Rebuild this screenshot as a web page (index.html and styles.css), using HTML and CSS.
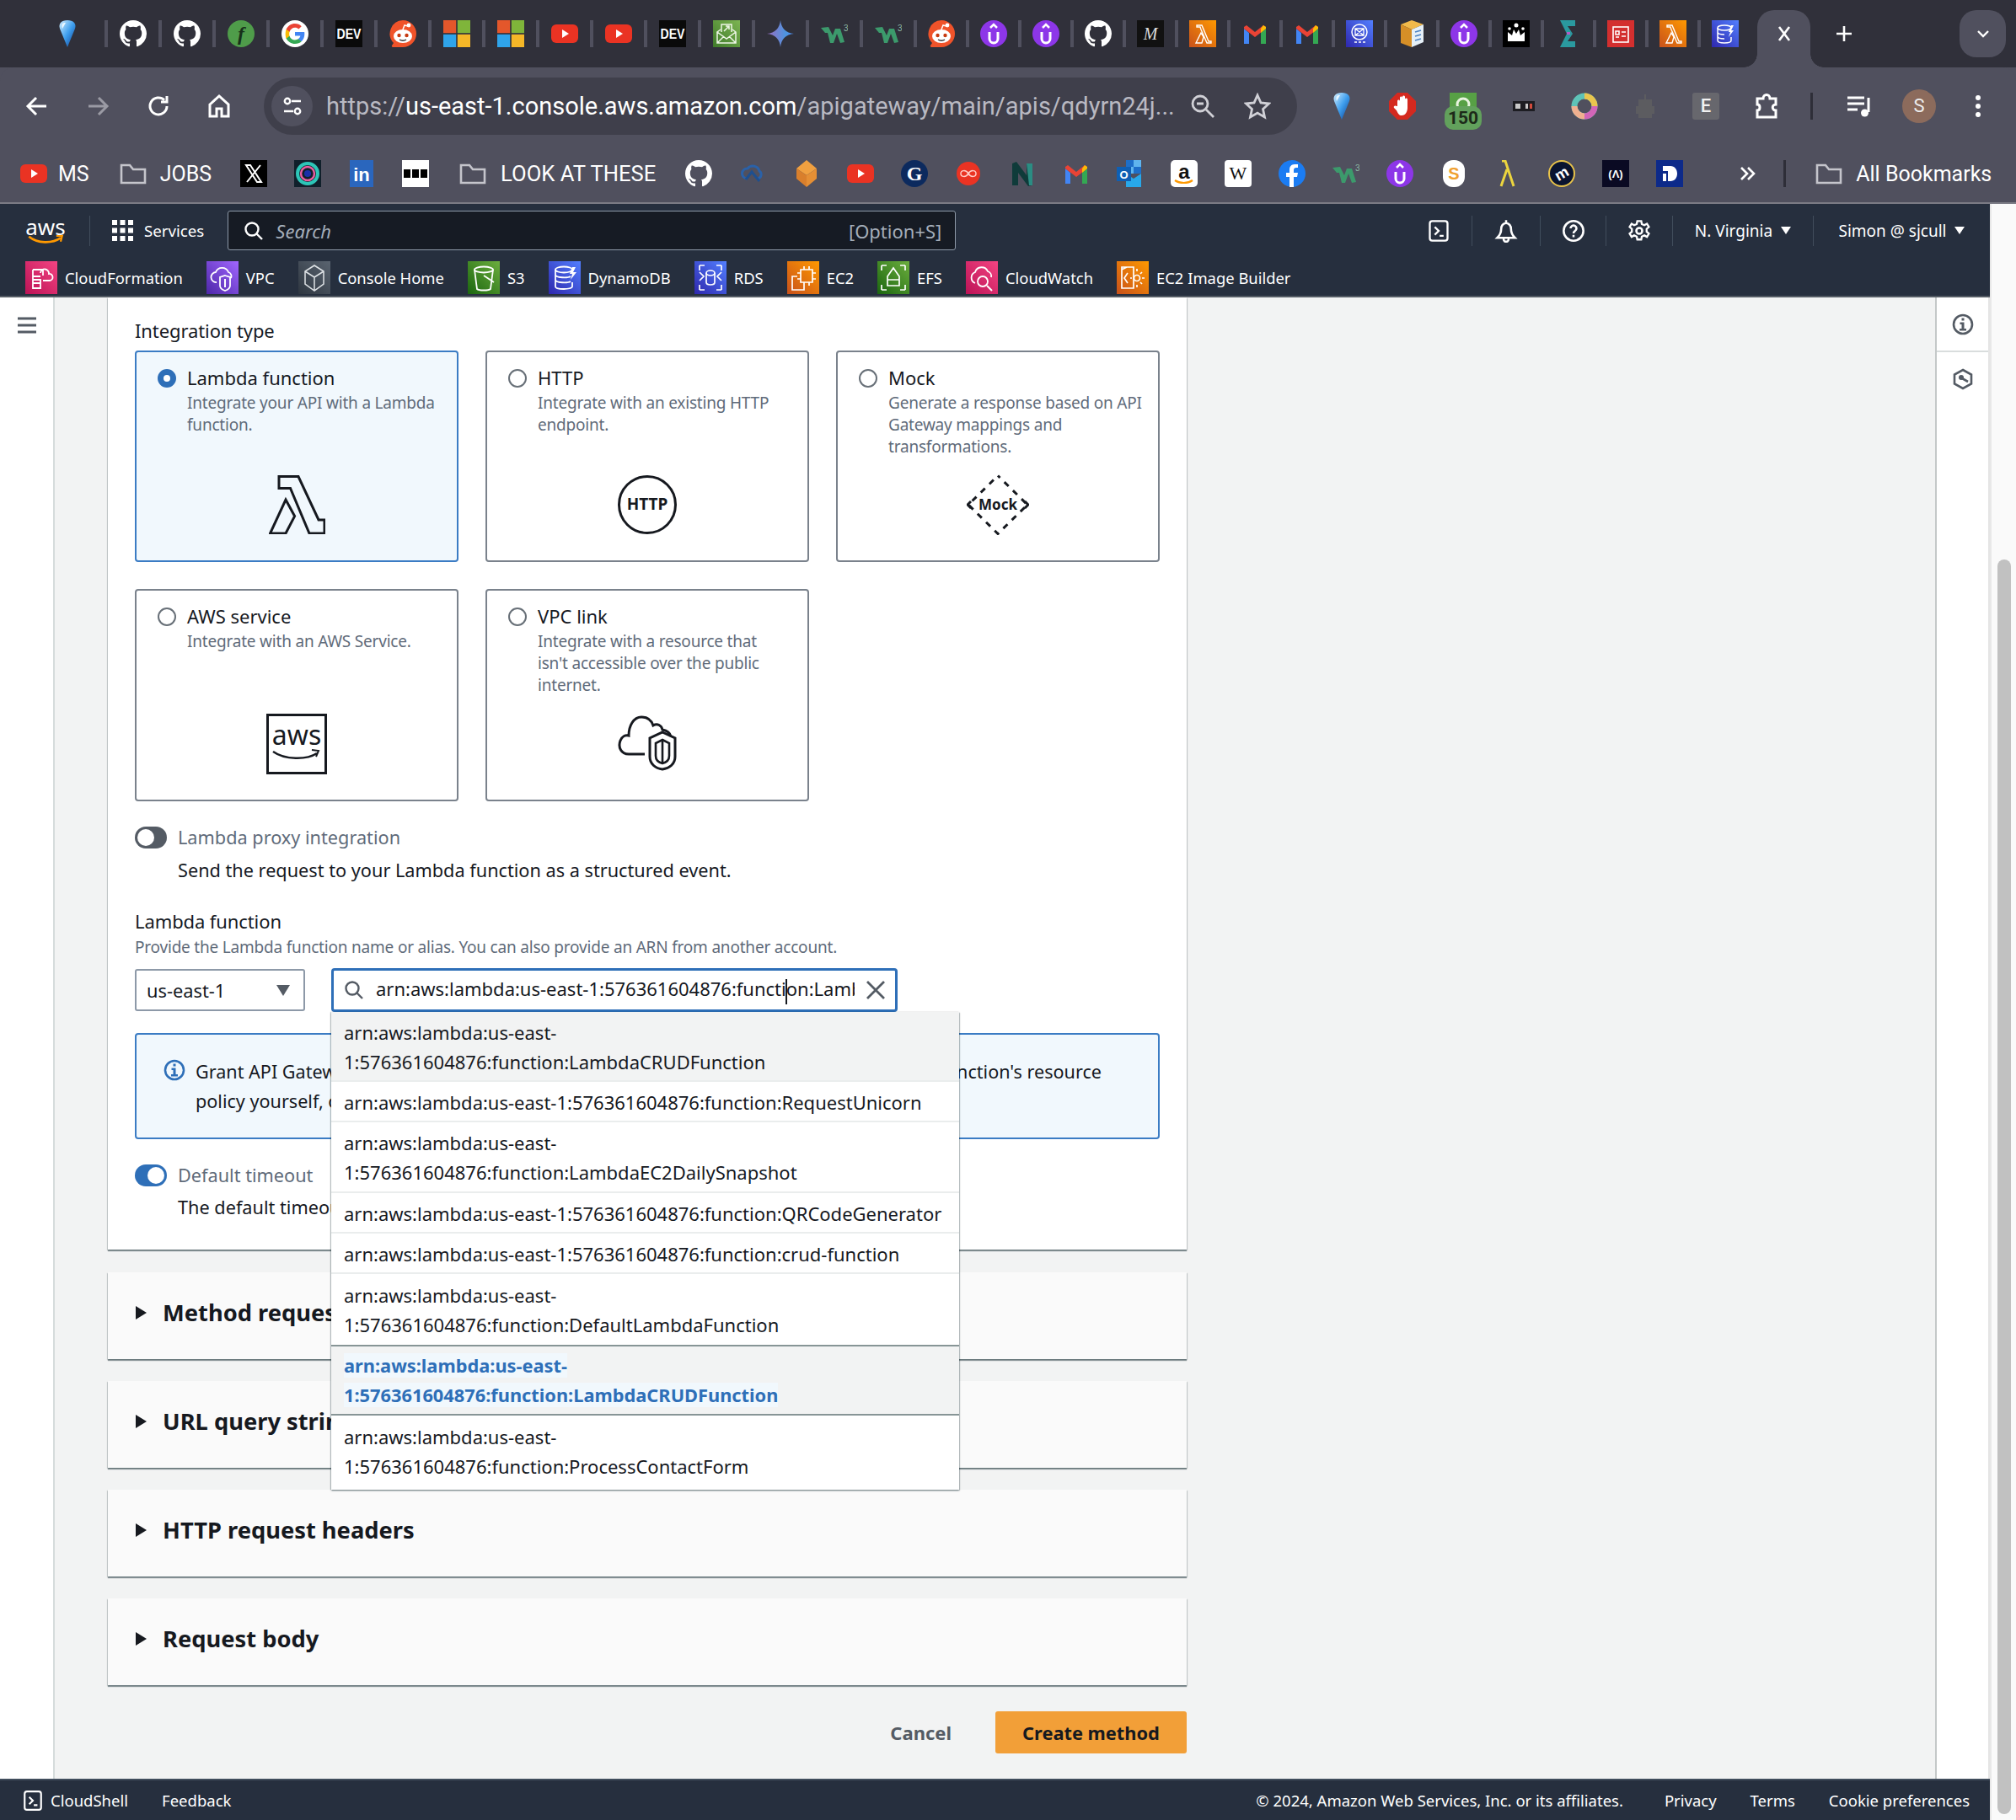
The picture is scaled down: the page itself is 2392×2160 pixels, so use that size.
FILE: index.html
```html
<!DOCTYPE html>
<html lang="en">
<head>
<meta charset="utf-8">
<title>Create method - API Gateway</title>
<link rel="stylesheet" href="styles.css">
</head>
<body>
<svg class="defs" xmlns="http://www.w3.org/2000/svg">
  <defs>
    <linearGradient id="gGem" x1="0" y1="0" x2="1" y2="1"><stop offset="0" stop-color="#d4efff"/><stop offset=".5" stop-color="#3f9fee"/><stop offset="1" stop-color="#0a3c8f"/></linearGradient>
    <linearGradient id="gStar" x1="0" y1="0" x2="1" y2="0"><stop offset="0" stop-color="#9a6cc0"/><stop offset=".7" stop-color="#4d95e0"/><stop offset="1" stop-color="#4d8df5"/></linearGradient>
    <linearGradient id="gOrange" x1="0" y1="1" x2="1" y2="0"><stop offset="0" stop-color="#c8511b"/><stop offset="1" stop-color="#ff9900"/></linearGradient>
    <linearGradient id="gBlue" x1="0" y1="1" x2="1" y2="0"><stop offset="0" stop-color="#2e27ad"/><stop offset="1" stop-color="#527fff"/></linearGradient>
    <linearGradient id="gMail" x1="0" y1="1" x2="1" y2="0"><stop offset="0" stop-color="#3f7a2a"/><stop offset="1" stop-color="#7db552"/></linearGradient>
    <symbol id="gem" viewBox="0 0 32 32"><path fill="url(#gGem)" d="M16 0C9 0 5 4 7 10l9 22 9-22c2-6-2-10-9-10z"/><path fill="#e9f7ff" d="M12 3c-3 1-3 4-2 7l4-7z"/></symbol>
    <symbol id="gh" viewBox="0 0 16 16"><path fill="#fff" d="M8 0C3.58 0 0 3.58 0 8c0 3.54 2.29 6.53 5.47 7.59.4.07.55-.17.55-.38 0-.19-.01-.82-.01-1.49-2.01.37-2.53-.49-2.69-.94-.09-.23-.48-.94-.82-1.13-.28-.15-.68-.52-.01-.53.63-.01 1.08.58 1.23.82.72 1.21 1.87.87 2.33.66.07-.52.28-.87.51-1.07-1.78-.2-3.64-.89-3.64-3.95 0-.87.31-1.59.82-2.15-.08-.2-.36-1.02.08-2.12 0 0 .67-.21 2.2.82.64-.18 1.32-.27 2-.27s1.36.09 2 .27c1.53-1.04 2.2-.82 2.2-.82.44 1.1.16 1.92.08 2.12.51.56.82 1.27.82 2.15 0 3.07-1.87 3.75-3.65 3.95.29.25.54.73.54 1.48 0 1.07-.01 1.93-.01 2.2 0 .21.15.46.55.38A8.013 8.013 0 0 0 16 8c0-4.42-3.58-8-8-8z"/></symbol>
    <symbol id="feedly" viewBox="0 0 32 32"><circle cx="16" cy="16" r="16" fill="#4f9c4a"/><text x="16" y="24" font-family="Liberation Serif" font-style="italic" font-weight="700" font-size="24" fill="#17301a" text-anchor="middle">f</text></symbol>
    <symbol id="google" viewBox="0 0 48 48"><circle cx="24" cy="24" r="24" fill="#fff"/><path fill="#4285f4" d="M41 24.5c0-1.3-.1-2.500-.3-3.500H24v6.800h9.600c-.4 2.200-1.700 4-3.500 5.300v4.400h5.700C39.100 34.400 41 29.900 41 24.500z"/><path fill="#34a853" d="M24 42c4.700 0 8.600-1.600 11.500-4.200l-5.700-4.400c-1.600 1.100-3.600 1.700-5.800 1.700-4.500 0-8.300-3-9.700-7.100H8.500v4.500C11.400 38 17.300 42 24 42z"/><path fill="#fbbc05" d="M14.300 28c-.7-2.500-.7-5.200 0-7.500V16H8.500c-2 3.900-2 12.600 0 16.500z"/><path fill="#ea4335" d="M24 13.200c2.600 0 4.800.9 6.600 2.600l5-5C32.600 7.800 28.700 6 24 6 17.300 6 11.400 10 8.500 16l5.800 4.500c1.400-4.200 5.200-7.300 9.700-7.300z"/></symbol>
    <symbol id="dev" viewBox="0 0 32 32"><rect width="32" height="32" fill="#0a0a0a"/><text x="1.500" y="22" font-family="Liberation Sans" font-weight="700" font-size="17" fill="#fff" textLength="29" lengthAdjust="spacingAndGlyphs">DEV</text></symbol>
    <symbol id="reddit" viewBox="0 0 32 32"><path fill="#f0532a" d="M16 0a16 16 0 1 1 0 32H4c-1 0-1.500-1-1-2l2-3A16 16 0 0 1 16 0z"/><ellipse cx="16" cy="19" rx="11" ry="8" fill="#fff"/><circle cx="11.500" cy="18" r="2.200" fill="#c73a12"/><circle cx="20.500" cy="18" r="2.200" fill="#c73a12"/><path d="M12 23c2.500 1.600 5.500 1.600 8 0" stroke="#333" stroke-width="1.400" fill="none"/><path d="M16 11l2-5 4 1" stroke="#fff" stroke-width="1.500" fill="none"/><circle cx="23" cy="6" r="2.400" fill="#fff"/></symbol>
    <symbol id="ms" viewBox="0 0 32 32"><rect width="15.200" height="15.200" fill="#e4572b"/><rect x="16.800" width="15.200" height="15.200" fill="#7fb53a"/><rect y="16.800" width="15.200" height="15.200" fill="#2fa4ea"/><rect x="16.800" y="16.800" width="15.200" height="15.200" fill="#f5b728"/></symbol>
    <symbol id="yt" viewBox="0 0 32 32"><rect x="0" y="5" width="32" height="22" rx="6" fill="#ea3323"/><path d="M13 11l8 5-8 5z" fill="#fff"/></symbol>
    <symbol id="mailg" viewBox="0 0 32 32"><rect width="32" height="32" fill="url(#gMail)"/><path d="M5 14v13h22V14l-4-3M9 11l-4 3 11 8 11-8M5 27l8-8M27 27l-8-8" fill="none" stroke="#eef6e6" stroke-width="1.500"/><path d="M10 14V5h12v9M13 13l6-6m-4 0h4v4" fill="none" stroke="#eef6e6" stroke-width="1.500"/></symbol>
    <symbol id="gemini" viewBox="0 0 32 32"><path fill="url(#gStar)" d="M16 0Q17.500 14.500 32 16 17.500 17.500 16 32 14.500 17.500 0 16 14.500 14.500 16 0z"/></symbol>
    <symbol id="w3" viewBox="0 0 32 32"><path fill="#3c9a6c" d="M0 9l9-1 5 10 3-8h6l5 16-5 1-4-11-4 11h-4L8 15l-3 0z"/><text x="27" y="13" font-family="Liberation Sans" font-size="10" fill="#8fb8a4">3</text></symbol>
    <symbol id="uni" viewBox="0 0 32 32"><circle cx="16" cy="16" r="16" fill="#8d36e8"/><path d="M11 14v8a5 5 0 0 0 10 0v-8" fill="none" stroke="#fff" stroke-width="3"/><path d="M12 9l4-4 4 4" fill="none" stroke="#fff" stroke-width="2.500"/></symbol>
    <symbol id="mdark" viewBox="0 0 32 32"><rect width="32" height="32" fill="#111"/><text x="16" y="23" font-family="Liberation Serif" font-style="italic" font-size="20" fill="#ddd" text-anchor="middle">M</text></symbol>
    <symbol id="lam" viewBox="0 0 32 32"><rect width="32" height="32" fill="url(#gOrange)"/><path d="M9 6h6l8 19h3v2h-5l-7-16-1-3H9zM14 15l3 5-2 7H8z" fill="none" stroke="#fff" stroke-width="1.400"/></symbol>
    <symbol id="gmail" viewBox="0 0 32 32"><path fill="#4285f4" d="M3 28V10l6 5v13z"/><path fill="#34a853" d="M23 28V15l6-5v18z"/><path fill="#ea4335" d="M3 10l13 10 13-10v-2l-3-2-10 8L6 6 3 8z"/><path fill="#fbbc05" d="M23 10v5l6-5V8l-3-2z"/></symbol>
    <symbol id="svcmail" viewBox="0 0 32 32"><rect width="32" height="32" fill="url(#gBlue)"/><circle cx="16" cy="14" r="9" fill="none" stroke="#fff" stroke-width="1.500"/><path d="M11 10h10v8H11zM11 10l10 8M21 10l-10 8M10 26h3M15 26h3M20 26h3" fill="none" stroke="#fff" stroke-width="1.300"/></symbol>
    <symbol id="box" viewBox="0 0 32 32"><path fill="#f1b94a" d="M16 0l14 5-14 6L3 5z"/><path fill="#d68f27" d="M3 5l13 6v21L3 27z"/><path fill="#e6f0f8" d="M16 11l14-6v21l-14 6z"/><path stroke="#4c82c4" stroke-width="1.800" d="M20 14l7-2M20 19l7-2M20 24l7-2"/></symbol>
    <symbol id="crown" viewBox="0 0 32 32"><rect width="32" height="32" fill="#000"/><path fill="#fff" d="M6 25V14l5 4 2-7 3 5 3-5 2 7 5-4v11z"/><circle cx="16" cy="6" r="2.500" fill="#fff"/><circle cx="8" cy="10" r="1.800" fill="#fff"/><circle cx="24" cy="10" r="1.800" fill="#fff"/></symbol>
    <symbol id="sigma" viewBox="0 0 32 32"><path fill="#2a9a9f" d="M6 0h18v7H15l6 9-6 9h9v7H6l8-16z"/><path fill="#b45cc7" d="M14 14h4v3h-4z"/></symbol>
    <symbol id="redbox" viewBox="0 0 32 32"><rect width="32" height="32" fill="#d32f2f"/><rect x="7" y="8" width="18" height="18" fill="none" stroke="#fff" stroke-width="1.600"/><path d="M10 13h4v4h-4zM10 20h4M17 14h5M17 19h5" fill="none" stroke="#fff" stroke-width="1.600"/></symbol>
    <symbol id="dyn" viewBox="0 0 32 32"><rect width="32" height="32" fill="url(#gBlue)"/><ellipse cx="15" cy="9" rx="8" ry="3" fill="none" stroke="#fff" stroke-width="1.500"/><path d="M7 9v15c0 2 4 3 8 3s8-1 8-3v-4M7 14c0 2 4 3 8 3M7 19c0 2 4 3 8 3" fill="none" stroke="#fff" stroke-width="1.500"/><path d="M23 6l3 0-3 6h3l-6 8 2-6h-2z" fill="#fff"/></symbol>
    <symbol id="cloudb" viewBox="0 0 32 32"><path d="M9 22a6 6 0 0 1 1-12 8 8 0 0 1 14 3 5 5 0 0 1-2 9" fill="none" stroke="#2a61a8" stroke-width="3"/><path d="M8 23l7-9 9 11" fill="none" stroke="#1e4f8f" stroke-width="3"/></symbol>
    <symbol id="cube" viewBox="0 0 32 32"><path fill="#f0a040" d="M16 0l12 10-12 8-12-8z"/><path fill="#d97f2c" d="M4 10l12 8v14L4 22z"/><path fill="#e58f35" d="M28 10L16 18v14l12-10z"/></symbol>
    <symbol id="guard" viewBox="0 0 32 32"><circle cx="16" cy="16" r="16" fill="#0c2a5e"/><text x="16" y="24" font-family="Liberation Serif" font-weight="700" font-size="24" fill="#fff" text-anchor="middle">G</text></symbol>
    <symbol id="inf" viewBox="0 0 32 32"><circle cx="16" cy="16" r="14" fill="#ea3323"/><path d="M16 16c-3-5-9-4-9 0s6 5 9 0 9-4 9 0-6 5-9 0z" fill="none" stroke="#ffcdc7" stroke-width="1.500"/></symbol>
    <symbol id="nn" viewBox="0 0 32 32"><path fill="#0f3b3a" d="M4 30V4l5-2 12 16V4h7v26l-5 1L11 15v15z"/><path fill="#2b8d83" d="M21 4h7v26h-4z"/></symbol>
    <symbol id="outlook" viewBox="0 0 32 32"><path fill="#1d6fc9" d="M11 0h18v16H11z"/><path fill="#5fb5ee" d="M20 0h9v8h-9zM11 8h9v8h-9z"/><path fill="#28a8ea" d="M11 16l9 6 9-6v16H11z"/><rect y="8" width="17" height="17" fill="#0f5fb3"/><text x="8.500" y="22" font-family="Liberation Sans" font-weight="700" font-size="13" fill="#fff" text-anchor="middle">O</text></symbol>
    <symbol id="amazon" viewBox="0 0 32 32"><rect width="32" height="32" rx="5" fill="#fff"/><text x="16" y="22" font-family="Liberation Sans" font-weight="700" font-size="24" fill="#111" text-anchor="middle">a</text><path d="M5 24c6 4 15 4 21 0" stroke="#f90" stroke-width="2.200" fill="none"/></symbol>
    <symbol id="wiki" viewBox="0 0 32 32"><rect width="32" height="32" rx="4" fill="#fff"/><text x="16" y="23" font-family="Liberation Serif" font-size="22" fill="#111" text-anchor="middle">W</text></symbol>
    <symbol id="fb" viewBox="0 0 32 32"><circle cx="16" cy="16" r="16" fill="#1b7cf2"/><path fill="#fff" d="M18 32V20h4l1-5h-5v-3c0-2 1-3 3-3h2V5h-4c-4 0-6 3-6 6v4h-4v5h4v12z"/></symbol>
    <symbol id="sman" viewBox="0 0 32 32"><rect x="3" y="0" width="26" height="32" rx="12" fill="#fff"/><text x="16" y="23" font-family="Liberation Sans" font-weight="700" font-size="20" fill="#f0a030" text-anchor="middle">S</text></symbol>
    <symbol id="lamy" viewBox="0 0 32 32"><path d="M9 1h4l10 30M15 11L8 31" fill="none" stroke="#ecd53f" stroke-width="3"/></symbol>
    <symbol id="mround" viewBox="0 0 32 32"><circle cx="16" cy="16" r="15" fill="#0a1430" stroke="#e8c34a" stroke-width="2"/><text x="16" y="22" font-family="Liberation Sans" font-weight="700" font-size="18" fill="#fff" text-anchor="middle" transform="rotate(-30 16 16)">m</text></symbol>
    <symbol id="fcc" viewBox="0 0 32 32"><rect width="32" height="32" fill="#0a0a23"/><text x="16" y="21" font-family="Liberation Sans" font-size="13" font-weight="700" fill="#fff" text-anchor="middle">(&#923;)</text></symbol>
    <symbol id="dash" viewBox="0 0 32 32"><rect width="32" height="32" fill="#0d2a8a"/><path fill="#fff" d="M8 7h9c5 0 8 4 8 9s-3 9-8 9h-3V13H8zM8 16h4v9H8z"/></symbol>
    <symbol id="xlogo" viewBox="0 0 32 32"><rect width="32" height="32" fill="#000"/><path fill="none" stroke="#fff" stroke-width="2" d="M7 6h5l13 20h-5zM24 6L8 26"/></symbol>
    <symbol id="ring" viewBox="0 0 32 32"><rect width="32" height="32" fill="#10202b"/><circle cx="16" cy="16" r="12" fill="none" stroke="#2dc6b8" stroke-width="4"/><circle cx="16" cy="16" r="8" fill="none" stroke="#ea5fa0" stroke-width="2.500"/><circle cx="16" cy="16" r="4" fill="#1b2fa8"/></symbol>
    <symbol id="lnk" viewBox="0 0 32 32"><rect x="2" width="28" height="32" fill="#2a66bd"/><text x="16" y="25" font-family="Liberation Sans" font-weight="700" font-size="22" fill="#fff" text-anchor="middle">in</text></symbol>
    <symbol id="blk" viewBox="0 0 32 32"><rect width="32" height="32" fill="#fff"/><path fill="#000" d="M2 11h8v10H2zM12 11h8v10h-8zM22 11h8v10h-8z"/></symbol>
    <symbol id="folder" viewBox="0 0 32 32"><path fill="none" stroke="#c5c5cc" stroke-width="2.600" d="M2 27V6h10l4 5h14v16z"/></symbol>
    <symbol id="trm" viewBox="0 0 24 24"><rect x="3" y="2" width="18" height="20" rx="2.500" fill="none" stroke="#fff" stroke-width="2"/><path d="M8 8l4 4-4 4M13 17h4" fill="none" stroke="#fff" stroke-width="2"/></symbol>
  </defs>
</svg>

<div class="chrome">
  <div class="tabstrip">
    <svg class="fav first"><use href="#gem"/></svg>
    <div class="tab"><svg class="fav"><use href="#gh"/></svg></div>
    <div class="tab"><svg class="fav"><use href="#gh"/></svg></div>
    <div class="tab"><svg class="fav"><use href="#feedly"/></svg></div>
    <div class="tab"><svg class="fav"><use href="#google"/></svg></div>
    <div class="tab"><svg class="fav"><use href="#dev"/></svg></div>
    <div class="tab"><svg class="fav"><use href="#reddit"/></svg></div>
    <div class="tab"><svg class="fav"><use href="#ms"/></svg></div>
    <div class="tab"><svg class="fav"><use href="#ms"/></svg></div>
    <div class="tab"><svg class="fav"><use href="#yt"/></svg></div>
    <div class="tab"><svg class="fav"><use href="#yt"/></svg></div>
    <div class="tab"><svg class="fav"><use href="#dev"/></svg></div>
    <div class="tab"><svg class="fav"><use href="#mailg"/></svg></div>
    <div class="tab"><svg class="fav"><use href="#gemini"/></svg></div>
    <div class="tab"><svg class="fav"><use href="#w3"/></svg></div>
    <div class="tab"><svg class="fav"><use href="#w3"/></svg></div>
    <div class="tab nr"><svg class="fav"><use href="#reddit"/></svg></div>
    <div class="tab nr"><svg class="fav"><use href="#uni"/></svg></div>
    <div class="tab nr"><svg class="fav"><use href="#uni"/></svg></div>
    <div class="tab nr"><svg class="fav"><use href="#gh"/></svg></div>
    <div class="tab nr"><svg class="fav"><use href="#mdark"/></svg></div>
    <div class="tab nr"><svg class="fav"><use href="#lam"/></svg></div>
    <div class="tab nr"><svg class="fav"><use href="#gmail"/></svg></div>
    <div class="tab nr"><svg class="fav"><use href="#gmail"/></svg></div>
    <div class="tab nr"><svg class="fav"><use href="#svcmail"/></svg></div>
    <div class="tab nr"><svg class="fav"><use href="#box"/></svg></div>
    <div class="tab nr"><svg class="fav"><use href="#uni"/></svg></div>
    <div class="tab nr"><svg class="fav"><use href="#crown"/></svg></div>
    <div class="tab nr"><svg class="fav"><use href="#sigma"/></svg></div>
    <div class="tab nr"><svg class="fav"><use href="#redbox"/></svg></div>
    <div class="tab nr"><svg class="fav"><use href="#lam"/></svg></div>
    <div class="tab nr"><svg class="fav"><use href="#dyn"/></svg></div>
    <div class="active-tab"><svg class="ic24" viewBox="0 0 24 24"><path d="M6 4l12 16M18 4L6 20" stroke="#fff" stroke-width="2.600" fill="none"/></svg></div>
    <svg class="newtab" viewBox="0 0 24 24"><path d="M12 3v18M3 12h18" stroke="#fff" stroke-width="2.600" fill="none"/></svg>
    <div class="tabchev"><svg class="ic20" viewBox="0 0 20 20"><path d="M4 7l6 6 6-6" stroke="#fff" stroke-width="2.400" fill="none"/></svg></div>
  </div>

  <div class="toolbar">
    <div class="nav first"><svg class="ic32" viewBox="0 0 32 32"><path d="M27 16H6M15 6L5 16l10 10" stroke="#fff" stroke-width="3" fill="none"/></svg></div>
    <div class="nav"><svg class="ic32" viewBox="0 0 32 32"><path d="M5 16h21M17 6l10 10-10 10" stroke="#9a9aa4" stroke-width="3" fill="none"/></svg></div>
    <div class="nav"><svg class="ic32" viewBox="0 0 32 32"><path d="M26 16a10 10 0 1 1-3-7.200M26 4v7h-7" stroke="#fff" stroke-width="3" fill="none"/></svg></div>
    <div class="nav"><svg class="ic32" viewBox="0 0 32 32"><path d="M5 14L16 4l11 10v14h-8v-9h-6v9H5z" stroke="#fff" stroke-width="3" fill="none"/></svg></div>
    <div class="omnibox">
      <div class="siteinfo"><svg class="ic28" viewBox="0 0 28 28"><circle cx="8" cy="8" r="3.200" fill="none" stroke="#fff" stroke-width="2.400"/><path d="M13 8h11M4 20h11" stroke="#fff" stroke-width="2.600"/><circle cx="20" cy="20" r="3.200" fill="none" stroke="#fff" stroke-width="2.400"/></svg></div>
      <div class="url"><span class="dim">https://</span>us-east-1.console.aws.amazon.com<span class="dim">/apigateway/main/apis/qdyrn24j...</span></div>
      <svg class="ic32 zoomic" viewBox="0 0 32 32"><circle cx="13" cy="13" r="9" fill="none" stroke="#d0d0d6" stroke-width="2.800"/><path d="M20 20l9 9M9 13h8" stroke="#d0d0d6" stroke-width="2.800"/></svg>
      <svg class="ic32 star" viewBox="0 0 32 32"><path d="M16 3l4 9 9.500 1-7 6.500 2 9.500-8.500-5-8.500 5 2-9.500-7-6.500L12 12z" fill="none" stroke="#d0d0d6" stroke-width="2.800"/></svg>
    </div>
    <div class="ext start"><svg class="fav"><use href="#gem"/></svg></div>
    <div class="ext"><svg class="fav" viewBox="0 0 32 32"><path fill="#d4291f" d="M10 0h12l10 10v12L22 32H10L0 22V10z"/><path fill="#fff" d="M10 16v-6c0-2 3-2 3 0V6c0-2 3-2 3 0V5c0-2 3-2 3 0v3c0-2 3-2 3 0v10c0 4-2 9-7 9-3 0-4-2-6-6l-3-3c-1-2 1-3 3-2z"/></svg></div>
    <div class="ext"><div class="badgewrap"><svg class="fav" viewBox="0 0 32 32"><rect width="32" height="18" fill="#57a045"/><circle cx="16" cy="14" r="7" fill="none" stroke="#e8f3df" stroke-width="3"/></svg><span class="badge">150</span></div></div>
    <div class="ext"><svg class="fav" viewBox="0 0 32 32"><rect x="3" y="10" width="26" height="12" fill="#1d1d22"/><rect x="6" y="13" width="6" height="6" fill="#c9c9c9"/><rect x="18" y="13" width="3" height="6" fill="#c9c9c9"/><rect x="23" y="13" width="3" height="6" fill="#d24a3c"/></svg></div>
    <div class="ext"><svg class="fav" viewBox="0 0 32 32"><circle cx="16" cy="16" r="12" fill="none" stroke="#5ec3b7" stroke-width="7"/><path d="M16 4a12 12 0 0 1 12 12" fill="none" stroke="#e9c64e" stroke-width="7"/><path d="M28 16a12 12 0 0 1-12 12" fill="none" stroke="#d265b8" stroke-width="7"/><path d="M16 28A12 12 0 0 1 4 16" fill="none" stroke="#f0b090" stroke-width="7"/></svg></div>
    <div class="ext"><svg class="fav" viewBox="0 0 32 32"><path fill="#5c5c60" d="M15 2h2v6h-2zM8 8h16v8h3v9h-3v5H8v-5H5v-9h3z"/></svg></div>
    <div class="ext"><div class="e-ext">E</div></div>
    <div class="ext"><svg class="fav" viewBox="0 0 32 32"><path d="M5 7h7c0-6 8-6 8 0h7v7c-5 0-5 7 0 7v8H5v-8c4 0 4-7 0-7z" fill="none" stroke="#fff" stroke-width="3"/></svg></div>
    <div class="tsep"></div>
    <div class="ext media"><svg class="fav" viewBox="0 0 32 32"><path d="M2 6h20M2 13h20M2 20h12" stroke="#fff" stroke-width="3"/><path d="M27 6v17" stroke="#fff" stroke-width="3"/><circle cx="22.500" cy="24" r="4.500" fill="#fff"/></svg></div>
    <div class="ext av"><div class="avatar">S</div></div>
    <div class="ext"><svg class="fav" viewBox="0 0 32 32"><circle cx="16" cy="6" r="3" fill="#fff"/><circle cx="16" cy="16" r="3" fill="#fff"/><circle cx="16" cy="26" r="3" fill="#fff"/></svg></div>
  </div>

  <div class="bookmarks">
    <div class="bm ms"><svg class="fav"><use href="#yt"/></svg><span>MS</span></div>
    <div class="bm jobs"><svg class="fav"><use href="#folder"/></svg><span>JOBS</span></div>
    <svg class="fav"><use href="#xlogo"/></svg>
    <svg class="fav"><use href="#ring"/></svg>
    <svg class="fav"><use href="#lnk"/></svg>
    <svg class="fav"><use href="#blk"/></svg>
    <div class="bm look"><svg class="fav"><use href="#folder"/></svg><span>LOOK AT THESE</span></div>
    <svg class="fav"><use href="#gh"/></svg>
    <svg class="fav"><use href="#cloudb"/></svg>
    <svg class="fav"><use href="#cube"/></svg>
    <svg class="fav"><use href="#yt"/></svg>
    <svg class="fav"><use href="#guard"/></svg>
    <svg class="fav"><use href="#inf"/></svg>
    <svg class="fav"><use href="#nn"/></svg>
    <svg class="fav"><use href="#gmail"/></svg>
    <svg class="fav"><use href="#outlook"/></svg>
    <svg class="fav"><use href="#amazon"/></svg>
    <svg class="fav"><use href="#wiki"/></svg>
    <svg class="fav"><use href="#fb"/></svg>
    <svg class="fav"><use href="#w3"/></svg>
    <svg class="fav"><use href="#uni"/></svg>
    <svg class="fav"><use href="#sman"/></svg>
    <svg class="fav"><use href="#lamy"/></svg>
    <svg class="fav"><use href="#mround"/></svg>
    <svg class="fav"><use href="#fcc"/></svg>
    <svg class="fav"><use href="#dash"/></svg>
    <svg class="more" viewBox="0 0 24 24"><path d="M5 5l7 7-7 7M13 5l7 7-7 7" stroke="#fff" stroke-width="2.600" fill="none"/></svg>
    <div class="bsep"></div>
    <div class="bm all"><svg class="fav"><use href="#folder"/></svg><span>All Bookmarks</span></div>
  </div>
</div>

<div class="app">
  <div class="console">
    <header class="awshead">
      <div class="hrow1">
        <div class="logo"><span class="logotext">aws</span><svg class="smile" viewBox="0 0 50 14"><path d="M2 2c12 10 32 10 44 2" stroke="#f90" stroke-width="3.200" fill="none"/><path d="M40 1l8 0-2 8" stroke="#f90" stroke-width="2.600" fill="none"/></svg></div>
        <div class="hdiv"></div>
        <svg class="grid" viewBox="0 0 25 25"><path fill="#fff" d="M0 0h6v6H0zM9.500 0h6v6h-6zM19 0h6v6h-6zM0 9.500h6v6H0zM9.500 9.500h6v6h-6zM19 9.500h6v6h-6zM0 19h6v6H0zM9.500 19h6v6h-6zM19 19h6v6h-6z"/></svg>
        <span class="services">Services</span>
        <div class="gsearch">
          <svg class="ic24" viewBox="0 0 24 24"><circle cx="10" cy="10" r="7.500" fill="none" stroke="#fff" stroke-width="2.400"/><path d="M15.500 15.500L22 22" stroke="#fff" stroke-width="2.400"/></svg>
          <span class="gs-text">Search</span>
          <span class="gs-key">[Option+S]</span>
        </div>
        <div class="hright">
          <div class="hcell first"><svg class="ic28" viewBox="0 0 24 24"><use href="#trm"/></svg></div>
          <div class="hcell bell"><svg class="ic28" viewBox="0 0 24 24"><path d="M12 1v3M12 4c3 0 5 3 5 6 0 4 1 6 4 9H3c3-3 4-5 4-9 0-3 2-6 5-6zM9.500 19v1.500a2.500 2.500 0 0 0 5 0V19" fill="none" stroke="#fff" stroke-width="2.200"/></svg></div>
          <div class="hcell help"><svg class="ic28" viewBox="0 0 24 24"><circle cx="12" cy="12" r="10" fill="none" stroke="#fff" stroke-width="2.200"/><path d="M9 9.500a3 3 0 1 1 4.500 2.600c-1 .6-1.500 1.200-1.500 2.400M12 16v2.500" fill="none" stroke="#fff" stroke-width="2.200"/></svg></div>
          <div class="hcell gear"><svg class="ic28" viewBox="0 0 24 24"><circle cx="12" cy="12" r="3" fill="none" stroke="#fff" stroke-width="2.200"/><path d="M10 2h4l.6 3 2.600 1.200 2.600-1.500 2 3.300-2.300 2 0 2.800 2.300 2-2 3.300-2.600-1.500-2.600 1.200-.6 3h-4l-.6-3-2.600-1.200-2.600 1.500-2-3.300 2.300-2 0-2.800-2.300-2 2-3.300 2.600 1.500L9.400 5z" fill="none" stroke="#fff" stroke-width="2"/></svg></div>
          <div class="hcell region"><span>N. Virginia</span><i class="caret-w"></i></div>
          <div class="hcell user"><span>Simon @ sjcull</span><i class="caret-w"></i></div>
        </div>
      </div>
      <div class="hrow2">
        <div class="fav-item"><span class="svc pink"><svg viewBox="0 0 38 39"><path d="M9 10h12v7M9 10v22h9V22H9M9 18h9M9 26h9M18 14a5 5 0 0 1 10 1 4 4 0 0 1 1 8h-8" fill="none" stroke="#fff" stroke-width="1.800"/></svg></span>CloudFormation</div>
        <div class="fav-item"><span class="svc purple"><svg viewBox="0 0 38 39"><path d="M12 25a6 6 0 0 1-1-12 8 8 0 0 1 15 0 5 5 0 0 1 3 7M22 17l6 2v10c0 3-3 5-6 6-3-1-6-3-6-6V19z" fill="none" stroke="#fff" stroke-width="1.800"/><path d="M22 21v10" stroke="#fff" stroke-width="2"/></svg></span>VPC</div>
        <div class="fav-item"><span class="svc grayc"><svg viewBox="0 0 38 39"><path d="M19 5l11 7v15l-11 8-11-8V12zM8 12l11 7 11-7M19 19v16" fill="none" stroke="#dfe3e6" stroke-width="1.500"/></svg></span>Console Home</div>
        <div class="fav-item"><span class="svc green"><svg viewBox="0 0 38 39"><ellipse cx="19" cy="10" rx="11" ry="3.500" fill="none" stroke="#fff" stroke-width="1.800"/><path d="M8 10l3 23c2 2 14 2 16 0l3-23M19 17l12 8" fill="none" stroke="#fff" stroke-width="1.800"/></svg></span>S3</div>
        <div class="fav-item"><span class="svc blue"><svg viewBox="0 0 38 39"><ellipse cx="18" cy="10" rx="10" ry="3.500" fill="none" stroke="#fff" stroke-width="1.800"/><path d="M8 10v20c0 4 20 4 20 0v-5M8 16c0 4 15 4 18 2M8 22c0 4 15 4 18 2" fill="none" stroke="#fff" stroke-width="1.800"/><path d="M28 7h4l-3 6h4l-7 9 2-7h-3z" fill="#fff"/></svg></span>DynamoDB</div>
        <div class="fav-item"><span class="svc blue"><svg viewBox="0 0 38 39"><ellipse cx="19" cy="14" rx="5" ry="3" fill="none" stroke="#fff" stroke-width="1.700"/><path d="M14 14v11c0 4 10 4 10 0V14M6 13l5 5-5 5M32 13l-5 5 5 5M6 5h6M6 5v6M32 5h-6M32 5v6M6 34h6M6 34v-6M32 34h-6M32 34v-6" fill="none" stroke="#fff" stroke-width="1.700"/></svg></span>RDS</div>
        <div class="fav-item"><span class="svc orange"><svg viewBox="0 0 38 39"><path d="M16 10h14v15H16zM20 10V6M26 10V6M20 29v-4M26 29v-4M12 14h4M12 21h4M30 14h4M30 21h4M12 18H6v16h14v-5" fill="none" stroke="#fff" stroke-width="1.700"/></svg></span>EC2</div>
        <div class="fav-item"><span class="svc green"><svg viewBox="0 0 38 39"><path d="M12 29V18l7-10 7 10v11zM12 22h14M5 5h6M5 5v6M33 5h-6M33 5v6M5 34h6M5 34v-6M33 34h-6M33 34v-6" fill="none" stroke="#fff" stroke-width="1.700"/></svg></span>EFS</div>
        <div class="fav-item"><span class="svc pink"><svg viewBox="0 0 38 39"><path d="M11 26a7 7 0 0 1 0-13 8 8 0 0 1 15-1 6 6 0 0 1 4 7" fill="none" stroke="#fff" stroke-width="1.800"/><circle cx="20" cy="24" r="6" fill="none" stroke="#fff" stroke-width="1.800"/><path d="M25 29l6 6" stroke="#fff" stroke-width="2"/></svg></span>CloudWatch</div>
        <div class="fav-item"><span class="svc orange"><svg viewBox="0 0 38 39"><path d="M6 7h14v25H6zM6 10l6-3M13 14l-4 6 4 6" fill="none" stroke="#fff" stroke-width="1.700"/><circle cx="24" cy="20" r="3.500" fill="none" stroke="#fff" stroke-width="1.700"/><path d="M24 9v3M24 28v3M33 20h-3M18 20h-2M30 13l-2 2M30 27l-2-2" stroke="#fff" stroke-width="1.700"/></svg></span>EC2 Image Builder</div>
      </div>
    </header>

    <div class="body">
      <aside class="sidenav"><svg class="burger" viewBox="0 0 22 20"><path d="M0 2h22M0 10h22M0 18h22" stroke="#545b64" stroke-width="3"/></svg></aside>

      <main class="main">
        <section class="card">
          <div class="flabel">Integration type</div>
          <div class="tiles">
            <div class="tile on">
              <div class="tile-head"><i class="radio sel"></i><div><div class="t-title">Lambda function</div><div class="t-desc">Integrate your API with a Lambda function.</div></div></div>
              <svg class="t-ic lam-ic" viewBox="0 0 67 70"><path d="M12 1.500h23L59 53h7v16H48L25.500 15.500H12zM20 29l10.600 19.600L20 69H1.500z" fill="none" stroke="#16191f" stroke-width="3"/></svg>
            </div>
            <div class="tile">
              <div class="tile-head"><i class="radio"></i><div><div class="t-title">HTTP</div><div class="t-desc">Integrate with an existing HTTP endpoint.</div></div></div>
              <svg class="t-ic" viewBox="0 0 70 70"><circle cx="35" cy="35" r="33.500" fill="none" stroke="#16191f" stroke-width="3"/><text x="35" y="41" class="ic-label" font-size="19" text-anchor="middle">HTTP</text></svg>
            </div>
            <div class="tile">
              <div class="tile-head"><i class="radio"></i><div><div class="t-title">Mock</div><div class="t-desc">Generate a response based on API Gateway mappings and transformations.</div></div></div>
              <svg class="t-ic mock-ic" viewBox="0 0 74 72"><path d="M37 1.500L72 36 37 70.500 2 36z" fill="none" stroke="#16191f" stroke-width="3" stroke-dasharray="7 7.300" stroke-dashoffset="3.500"/><rect x="13" y="27" width="48" height="18" fill="#fff"/><path d="M5 32l-4 4 4 4M69 32l4 4-4 4" fill="none" stroke="#16191f" stroke-width="3"/><text x="37" y="42" class="ic-label" font-size="17" text-anchor="middle">Mock</text></svg>
            </div>
            <div class="tile">
              <div class="tile-head"><i class="radio"></i><div><div class="t-title">AWS service</div><div class="t-desc">Integrate with an AWS Service.</div></div></div>
              <svg class="t-ic aws-ic" viewBox="0 0 72 72"><rect x="1.500" y="1.500" width="69" height="69" fill="none" stroke="#16191f" stroke-width="3"/><text x="36" y="37" class="aws-word" font-size="32" text-anchor="middle">aws</text><path d="M8 45c14 10 40 10 52 2" fill="none" stroke="#16191f" stroke-width="2.400"/><path d="M54 43l8 1-3 7" fill="none" stroke="#16191f" stroke-width="2"/></svg>
            </div>
            <div class="tile">
              <div class="tile-head"><i class="radio"></i><div><div class="t-title">VPC link</div><div class="t-desc">Integrate with a resource that<br>isn't accessible over the public<br>internet.</div></div></div>
              <svg class="t-ic vpc-ic" viewBox="0 0 70 66"><path d="M32 46H13C4 46 0 38 3 30c2-5 6-7 10-6 0-12 6-22 15-22 7 0 12 4 14 10 5-3 10 0 11 5 5 1 9 4 10 8" fill="none" stroke="#16191f" stroke-width="3"/><path d="M53 20l15 7v22c0 9-7 14-15 15-8-1-15-6-15-15V27z" fill="none" stroke="#16191f" stroke-width="3"/><path d="M53 29l8 4v15c0 5-4 8-8 9-4-1-8-4-8-9V33zM53 29v28" fill="none" stroke="#16191f" stroke-width="2.600"/></svg>
            </div>
          </div>

          <div class="toggle-row first-t"><i class="toggle off"></i><span class="tg-label">Lambda proxy integration</span></div>
          <div class="tg-desc">Send the request to your Lambda function as a structured event.</div>

          <div class="flabel lf">Lambda function</div>
          <div class="fhint">Provide the Lambda function name or alias. You can also provide an ARN from another account.</div>
          <div class="inputs">
            <div class="regionsel"><span>us-east-1</span><i class="caret-d"></i></div>
            <div class="arn">
              <svg class="ic24 arn-s" viewBox="0 0 24 24"><circle cx="10" cy="10" r="7.500" fill="none" stroke="#545b64" stroke-width="2.400"/><path d="M15.500 15.500L22 22" stroke="#545b64" stroke-width="2.400"/></svg>
              <div class="arn-val">arn:aws:lambda:us-east-1:576361604876:functi<i class="cursor"></i>on:LambdaCRUDFunction</div>
              <svg class="ic24" viewBox="0 0 24 24"><path d="M2 2l20 20M22 2L2 22" stroke="#545b64" stroke-width="2.800" fill="none"/></svg>
              <ul class="dropdown">
                <li class="hov h2">arn:aws:lambda:us-east-<br>1:576361604876:function:LambdaCRUDFunction</li>
                <li class="h1">arn:aws:lambda:us-east-1:576361604876:function:RequestUnicorn</li>
                <li class="h2">arn:aws:lambda:us-east-<br>1:576361604876:function:LambdaEC2DailySnapshot</li>
                <li class="h1">arn:aws:lambda:us-east-1:576361604876:function:QRCodeGenerator</li>
                <li class="h1">arn:aws:lambda:us-east-1:576361604876:function:crud-function</li>
                <li class="h2 nol">arn:aws:lambda:us-east-<br>1:576361604876:function:DefaultLambdaFunction</li>
                <li class="h2 sel"><span class="mark">arn:aws:lambda:us-east-<br>1:576361604876:function:LambdaCRUDFunction</span></li>
                <li class="h2 last">arn:aws:lambda:us-east-<br>1:576361604876:function:ProcessContactForm</li>
              </ul>
            </div>
          </div>
          <div class="alert">
            <svg class="alert-ic" viewBox="0 0 26 26"><circle cx="13" cy="13" r="11" fill="none" stroke="#2e6fb8" stroke-width="2.600"/><path fill="#2e6fb8" d="M11.500 5.500h3v3h-3zM9.500 10.500h5V18h2.500v2.500H9v-2.500h2.500v-5h-2z"/></svg>
            <p>Grant API Gateway permission to invoke your Lambda function. To turn off, update the function's resource policy yourself, or use an invoke role.</p>
          </div>
          <div class="toggle-row second-t"><i class="toggle on"></i><span class="tg-label">Default timeout</span></div>
          <div class="tg-desc short">The default timeout is 29 seconds.</div>
        </section>

        <section class="acc"><i class="tri"></i><h3>Method request settings</h3></section>
        <section class="acc"><i class="tri"></i><h3>URL query string parameters</h3></section>
        <section class="acc"><i class="tri"></i><h3>HTTP request headers</h3></section>
        <section class="acc"><i class="tri"></i><h3>Request body</h3></section>

        <div class="actions">
          <span class="cancel">Cancel</span>
          <span class="create">Create method</span>
        </div>
      </main>

      <aside class="rail">
        <div class="rail-a"><svg class="ic26" viewBox="0 0 26 26"><circle cx="13" cy="13" r="11" fill="none" stroke="#545b64" stroke-width="2.600"/><path fill="#545b64" d="M11.500 5.500h3v3h-3zM9.500 10.500h5V18h2.500v2.500H9v-2.500h2.500v-5h-2z"/></svg></div>
        <div class="rail-b"><svg class="ic26" viewBox="0 0 26 26"><path d="M13 2l10 5.500v11L13 24 3 18.500v-11z" fill="none" stroke="#545b64" stroke-width="2.600"/><circle cx="11" cy="11" r="3" fill="#545b64"/><path d="M12 12l7 4" stroke="#545b64" stroke-width="2.600"/></svg></div>
      </aside>
    </div>

    <footer class="foot">
      <div class="foot-l"><svg class="ic26" viewBox="0 0 24 24"><use href="#trm"/></svg><span class="cs">CloudShell</span><span>Feedback</span></div>
      <div class="foot-r"><span class="copy">© 2024, Amazon Web Services, Inc. or its affiliates.</span><span>Privacy</span><span>Terms</span><span>Cookie preferences</span></div>
    </footer>
  </div>
  <div class="scroll"><div class="thumb"></div></div>
</div>
</body>
</html>
```

FILE: styles.css
```css
* { box-sizing: border-box; }
html, body { margin: 0; padding: 0; height: 2160px; width: 2392px; overflow: hidden; background: #fff; }
body { font-family: "Noto Sans", "Open Sans", sans-serif; color: #16191f; }
i { display: block; }
.defs { position: absolute; width: 0; height: 0; }
svg { display: block; flex: none; }
.fav { width: 32px; height: 32px; }
.ic20 { width: 20px; height: 20px; }
.ic24 { width: 24px; height: 24px; }
.ic26 { width: 26px; height: 26px; }
.ic28 { width: 28px; height: 28px; }
.ic32 { width: 32px; height: 32px; }

/* Browser chrome */
.chrome { background: #50505e; font-family: Roboto, "Noto Sans", sans-serif; color: #fff; }
.tabstrip { height: 80px; background: #30303a; display: flex; align-items: flex-start; padding-left: 64px; }
.tabstrip .fav.first { margin: 24px 28px 0 0; }
.tab { width: 64px; height: 32px; margin-top: 24px; border-left: 4px solid #50505e; display: flex; justify-content: center; }
.tab.nr { width: 62px; }
.active-tab { position: relative; margin-left: 9px; width: 63px; height: 68px; margin-top: 12px; background: #50505e; border-radius: 20px 20px 0 0; display: flex; align-items: center; justify-content: center; padding-bottom: 12px; }
.active-tab::before, .active-tab::after { content: ""; position: absolute; bottom: 0; width: 16px; height: 16px; }
.active-tab::before { right: 100%; background: radial-gradient(circle at 0 0, transparent 15.500px, #50505e 16px); }
.active-tab::after { left: 100%; background: radial-gradient(circle at 100% 0, transparent 15.500px, #50505e 16px); }
.newtab { width: 24px; height: 24px; margin: 28px 0 0 28px; }
.tabchev { margin: 12px 0 0 125px; width: 55px; height: 56px; border-radius: 20px; background: #50505e; display: flex; align-items: center; justify-content: center; }

.toolbar { height: 80px; display: flex; align-items: center; border-radius: 16px 16px 0 0; padding-left: 8px; padding-top: 12px; background: #50505e; }
.nav { width: 72px; display: flex; justify-content: center; }
.omnibox { margin-left: 17px; width: 1226px; height: 68px; border-radius: 34px; background: #3f3f4b; display: flex; align-items: center; padding-left: 9px; }
.siteinfo { width: 49px; height: 48px; border-radius: 24px; background: #50505e; display: flex; align-items: center; justify-content: center; }
.url { margin-left: 16px; width: 1006px; font-size: 29px; color: #fff; white-space: nowrap; overflow: hidden; }
.dim { color: #b9b9c2; }
.zoomic { margin-left: 18px; }
.star { margin-left: 33px; }
.ext { width: 72px; display: flex; justify-content: center; align-items: center; }
.ext.start { margin-left: 17px; }
.ext.av { margin: 0 -2px 0 -1px; }
.badgewrap { position: relative; width: 32px; height: 32px; }
.badge { position: absolute; left: -6px; top: 16px; width: 44px; height: 28px; border-radius: 10px; background: #62a15c; color: #1c2a19; font-size: 21px; font-weight: 700; text-align: center; line-height: 28px; }
.e-ext { width: 32px; height: 32px; background: #67676d; border-radius: 3px; font-size: 22px; font-weight: 500; text-align: center; line-height: 32px; color: #f1f1f1; }
.tsep { width: 3px; height: 32px; background: #2e2e38; margin-left: 16px; margin-right: 19px; }
.avatar { width: 40px; height: 40px; border-radius: 50%; background: #8c6b5c; text-align: center; line-height: 40px; font-size: 22px; color: #eee; }

.bookmarks { height: 82px; display: flex; align-items: center; gap: 32px; padding: 12px 0 0 24px; border-bottom: 2px solid #7b7b85; }
.bm { display: flex; align-items: center; gap: 16px; font-size: 25.600px; color: #fff; white-space: nowrap; }
.bm.ms { gap: 13px; margin-right: 4px; font-size: 25px; }
.bm.jobs { margin-right: 2px; font-size: 25px; }
.bm.look { margin: 0 3px 0 4px; gap: 17px; }
.more { width: 24px; height: 24px; margin-left: 32px; }
.bsep { width: 3px; height: 32px; background: #2e2e38; margin-left: -1px; }
.bm.all { margin-left: 3px; font-size: 25px; }

/* Console frame */
.app { display: flex; height: 1918px; }
.console { width: 2363px; display: flex; flex-direction: column; }
.scroll { flex: 1; background: #fafafa; border-left: 2px solid #e8e8e8; padding: 422px 6px 0 7px; }
.thumb { width: 16px; height: 1489px; border-radius: 8px; background: #c1c1c1; }

.awshead { background: #262f3e; height: 111px; flex: none; color: #fff; border-bottom: 2px solid #545b64; font-size: 19px; }
.hrow1 { height: 55px; display: flex; align-items: center; padding-top: 8px; padding-left: 29px; }
.logo { width: 50px; height: 31px; }
.logotext { display: block; font-size: 26px; line-height: 22px; text-align: center; font-family: "Noto Sans", sans-serif; }
.smile { width: 50px; height: 12px; margin-top: -1px; }
.hdiv { width: 1px; height: 36px; background: #414d5c; margin-left: 27px; }
.grid { width: 25px; height: 25px; margin-left: 26px; }
.services { margin-left: 13px; font-size: 18.700px; }
.gsearch { margin-left: 28px; width: 864px; height: 47px; background: #161b24; border: 1px solid #8d99a8; border-radius: 3px; display: flex; align-items: center; padding: 0 16px 0 18px; }
.gs-text { margin-left: 14px; font-style: italic; color: #a4aeba; font-size: 22px; }
.gs-key { margin-left: auto; color: #a4aeba; font-size: 22px; }
.hright { margin-left: auto; display: flex; align-items: center; height: 36px; }
.hcell { height: 36px; display: flex; align-items: center; justify-content: center; border-left: 1px solid #414d5c; width: 79px; gap: 10px; white-space: nowrap; }
.hcell.first { border-left: 0; }
.hcell.bell { width: 81px; }
.hcell.help { width: 78px; }
.hcell.region { width: 167px; }
.hcell.user { width: 210px; }
.caret-w { width: 0; height: 0; border-left: 6px solid transparent; border-right: 6px solid transparent; border-top: 9px solid #fff; }
.hrow2 { height: 54px; display: flex; gap: 28px; padding: 13px 0 0 30px; }
.fav-item { display: flex; align-items: center; gap: 9px; height: 39px; font-size: 18.400px; white-space: nowrap; }
.svc { width: 38px; height: 39px; display: block; }
.svc svg { width: 38px; height: 39px; }
.pink { background: linear-gradient(45deg, #bc1356, #f34482); }
.purple { background: linear-gradient(45deg, #4d27a8, #a166ff); }
.grayc { background: linear-gradient(45deg, #2e3640, #5a6470); }
.green { background: linear-gradient(45deg, #1b660f, #6cae3e); }
.blue { background: linear-gradient(45deg, #2e27ad, #527fff); }
.orange { background: linear-gradient(45deg, #c8511b, #ff9900); }

.body { flex: 1; min-height: 0; display: flex; background: #f2f3f3; overflow: hidden; }
.sidenav { width: 65px; flex: none; background: #fff; border-right: 2px solid #d5dbdb; padding: 23px 0 0 21px; }
.burger { width: 22px; height: 20px; }
.main { flex: 1; min-width: 0; padding-left: 63px; }
.rail { width: 65px; flex: none; background: #fff; border-left: 2px solid #c4c8c8; border-right: 2px solid #e5e5e5; }
.rail-a { height: 65px; border-bottom: 2px solid #d9dddd; display: flex; align-items: center; justify-content: center; }
.rail-b { display: flex; justify-content: center; padding-top: 19px; }

/* Form card */
.card { width: 1280px; background: #fff; padding: 24px 32px 35px; box-shadow: 0 2px 1px rgba(0, 28, 36, .4), 1px 1px 1px rgba(0, 28, 36, .15), -1px 1px 1px rgba(0, 28, 36, .15); }
.flabel { font-size: 22px; line-height: 30px; letter-spacing: -.1px; }
.tiles { margin-top: 9px; display: grid; grid-template-columns: repeat(3, 384px); grid-template-rows: 251px 252px; gap: 32px; }
.tile { border: 2px solid #7a828c; border-radius: 4px; padding: 15px 24px 31px; display: flex; flex-direction: column; align-items: stretch; }
.tile.on { border-color: #3b7cc4; background: #f1f8fd; }
.tile-head { display: flex; gap: 13px; margin-right: -8px; }
.radio { flex: none; width: 22px; height: 22px; margin-top: 5px; margin-left: 1px; border-radius: 50%; border: 2px solid #687078; background: #fff; }
.radio.sel { border: 7px solid #2e6fb8; }
.t-title { font-size: 22px; line-height: 30px; }
.t-desc { font-size: 19px; letter-spacing: -.2px; line-height: 26px; color: #5f6b7a; margin-top: 2px; }
.t-ic { margin: auto auto 0; width: 70px; height: 70px; }
.lam-ic { width: 67px; }
.mock-ic { width: 74px; height: 72px; margin-bottom: -1px; }
.aws-ic { width: 72px; height: 72px; margin-bottom: -1px; }
.vpc-ic { width: 70px; height: 66px; margin-bottom: 3px; }
.ic-label { font-family: "Noto Sans", sans-serif; font-weight: 700; fill: #16191f; }
.aws-word { font-family: "Noto Sans", sans-serif; fill: #16191f; }

.toggle-row { display: flex; align-items: center; gap: 13px; margin-top: 30px; height: 26px; }
.toggle { width: 38px; height: 26px; border-radius: 13px; background: #545b64; padding: 3px; display: flex; }
.toggle::before { content: ""; width: 20px; height: 20px; border-radius: 50%; background: #fff; }
.toggle.on { background: #2e6fb8; justify-content: flex-end; }
.tg-label { font-size: 21.700px; color: #5f6b7a; line-height: 30px; }
.tg-desc { margin: 11px 0 0 51px; font-size: 21.700px; line-height: 30px; }
.tg-desc.short { margin-top: 10px; }
.flabel.lf { margin-top: 30px; }
.fhint { margin-top: 3px; font-size: 19px; letter-spacing: -.2px; line-height: 26px; color: #5f6b7a; }
.inputs { margin-top: 12px; display: flex; gap: 31px; align-items: flex-start; }
.regionsel { width: 202px; height: 50px; border: 2px solid #8d99a8; border-radius: 3px; display: flex; align-items: center; padding: 0 16px 0 12px; font-size: 21.800px; justify-content: space-between; margin-top: 1px; }
.caret-d { width: 0; height: 0; border-left: 8px solid transparent; border-right: 8px solid transparent; border-top: 13px solid #545b64; }
.arn { position: relative; width: 672px; height: 52px; border: 3px solid #2e6fb8; border-radius: 4px; display: flex; align-items: center; padding: 0 11px 0 12px; }
.arn-val { margin: 0 13px 0 14px; width: 568px; flex: none; font-size: 22px; white-space: nowrap; overflow: hidden; }
.cursor { display: inline-block; width: 2px; height: 30px; margin: 0 -1px; background: #16191f; vertical-align: middle; }
.dropdown { position: absolute; left: -3px; top: 49px; width: 745px; height: 567px; margin: 0; padding: 0; list-style: none; background: #fff; z-index: 5; box-shadow: 0 1px 2px rgba(0, 28, 36, .5), 1px 1px 1px rgba(0, 28, 36, .15), -1px 0 1px rgba(0, 28, 36, .15); font-size: 22px; line-height: 35px; }
.dropdown li { padding: 7px 15px 0; border-bottom: 2px solid #eaeded; white-space: nowrap; }
.dropdown .h2 { height: 84px; }
.dropdown .h1 { height: 48px; }
.dropdown .hov { height: 83px; background: #f2f3f3; }
.dropdown .nol { border-bottom: 0; padding-top: 8px; }
.dropdown .sel { border-top: 2px solid #879596; border-bottom: 2px solid #879596; background: #f2f3f3; color: #2e6fb8; font-weight: 700; font-size: 21.800px; height: 84px; padding-top: 5px; }
.dropdown .last { border-bottom: 0; height: 88px; padding-top: 8px; }
.mark { background: #f1f8fd; }
.alert { margin-top: 25px; height: 126px; background: #f1f8fd; border: 2px solid #3b7cc4; border-radius: 4px; display: flex; padding: 27px 40px 0 32px; gap: 12px; }
.alert-ic { width: 26px; height: 26px; margin-top: 2px; }
.alert p { margin: 0; font-size: 21.600px; line-height: 34.500px; width: 1090px; }

.acc { width: 1280px; height: 103px; margin-top: 27px; background: #fafafa; display: flex; align-items: center; padding: 0 0 8px 33px; box-shadow: 0 2px 1px rgba(0, 28, 36, .4), 1px 1px 1px rgba(0, 28, 36, .15), -1px 1px 1px rgba(0, 28, 36, .15); }
.acc + .acc { margin-top: 26px; }
.tri { width: 0; height: 0; border-left: 13px solid #16191f; border-top: 8px solid transparent; border-bottom: 8px solid transparent; }
.acc h3 { margin: 0 0 0 19px; font-size: 27.300px; line-height: 36px; font-weight: 700; }

.actions { width: 1280px; margin-top: 31px; display: flex; justify-content: flex-end; align-items: center; gap: 52px; }
.cancel { font-size: 22px; font-weight: 700; color: #545b64; }
.create { width: 227px; height: 50px; background: #f29f38; border-radius: 3px; font-size: 21.800px; font-weight: 700; display: flex; align-items: center; justify-content: center; }

.foot { height: 49px; flex: none; background: #262f3e; color: #fff; border-top: 2px solid #414d5c; display: flex; justify-content: space-between; align-items: center; padding: 0 24px 0 26px; font-size: 18.500px; white-space: nowrap; }
.foot-l { display: flex; align-items: center; }
.cs { margin: 0 40px 0 8px; }
.foot-r { display: flex; gap: 40px; }
.copy { margin-right: 9px; }
```
